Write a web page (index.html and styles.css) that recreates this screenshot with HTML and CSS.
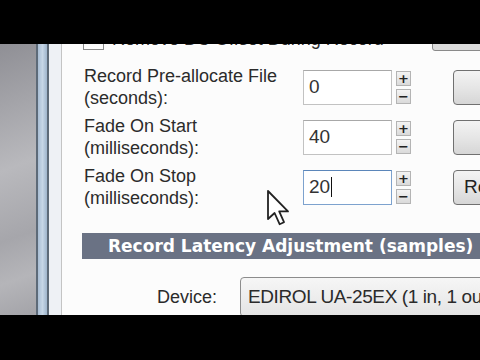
FILE: index.html
```html
<!DOCTYPE html>
<html lang="en">
<head>
  <meta charset="UTF-8">
  <title>Recording Options</title>
  <link rel="stylesheet" href="styles.css">
</head>
<body>
  <div class="bar-top"></div>
  <div class="screen">
    <div class="desktop"></div>
    <div class="win-edge">
      <div class="edge-dark"></div>
      <div class="edge-blue"></div>
      <div class="edge-dark"></div>
      <div class="edge-light"></div>
      <div class="edge-line"></div>
    </div>
    <div class="dialog">
      <!-- partly hidden checkbox row -->
      <div class="check-row">
        <span class="check"></span>
        <span class="check-text">Remove DC Offset During Record</span>
        <span class="btn-stub"></span>
      </div>

      <div class="field-row">
        <div class="label">Record Pre-allocate File<br>(seconds):</div>
        <div class="input">0</div>
        <div class="spin"><span>+</span><span>&minus;</span></div>
        <div class="btn"></div>
      </div>
      <div class="field-row">
        <div class="label">Fade On Start<br>(milliseconds):</div>
        <div class="input">40</div>
        <div class="spin"><span>+</span><span>&minus;</span></div>
        <div class="btn"></div>
      </div>
      <div class="field-row">
        <div class="label">Fade On Stop<br>(milliseconds):</div>
        <div class="input focused">20<span class="caret"></span></div>
        <div class="spin"><span>+</span><span>&minus;</span></div>
        <div class="btn">Reset</div>
      </div>

      <div class="section">Record Latency Adjustment (samples)</div>

      <div class="device-row">
        <div class="device-label">Device:</div>
        <div class="select">EDIROL UA-25EX (1 in, 1 out)</div>
      </div>
    </div>

    <!-- mouse pointer -->
    <svg class="cursor" width="26" height="38" viewBox="0 0 13 19">
      <path d="M1 1 L1 15 L4.3 12 L6.8 17.6 L9 16.6 L6.6 11.2 L11 11.2 Z" fill="#fff" stroke="#222" stroke-width="0.9" stroke-linejoin="round"/>
    </svg>
  </div>
  <div class="bar-bottom"></div>
</body>
</html>
```

FILE: styles.css
```css
html, body {
  margin: 0;
  padding: 0;
  background: #000;
}
body {
  width: 480px;
  height: 360px;
  overflow: hidden;
  font-family: "Liberation Sans", Arial, sans-serif;
}
.bar-top {
  height: 44px;
  background: #000;
}
.bar-bottom {
  height: 45px;
  background: #000;
}
.screen {
  position: relative;
  height: 271px;
  display: flex;
  overflow: hidden;
}

/* desktop and window border on the left */
.desktop {
  width: 36px;
  flex: none;
  background: linear-gradient(160deg, #8f8f95 0%, #b9b9bd 45%, #a6a6ab 70%, #b5b5b9 85%, #a3a3a8 100%);
}
.win-edge {
  display: flex;
  flex: none;
}
.edge-dark {
  width: 2px;
  background: #5d6a78;
}
.edge-blue {
  width: 9px;
  background: linear-gradient(90deg, #a9bed4, #c6d6e6 50%, #9fb5cc);
}
.edge-light {
  width: 12px;
  background: #eef1f5;
}
.edge-line {
  width: 1px;
  background: #c4c4c4;
}

/* dialog content */
.dialog {
  flex: none;
  width: 520px;
  background: #fcfcfc;
  padding-left: 20px;
  color: #2b2b2b;
  font-size: 18px;
}
.check-row {
  display: flex;
  align-items: center;
  height: 22px;
  margin-top: -16px;
  margin-bottom: 12px;
}
.check {
  width: 19px;
  height: 19px;
  margin-left: 1px;
  border: 1px solid #8a8a8a;
  background: linear-gradient(#f0f0f0, #fff);
  flex: none;
}
.check-text {
  margin-left: 8px;
  width: 314px;
  white-space: nowrap;
}
.btn-stub {
  width: 80px;
  height: 22px;
  margin-left: 6px;
  border: 1px solid #8a8a8a;
  border-radius: 3px;
  background: #dcdcdc;
}
.field-row {
  display: flex;
  align-items: center;
  height: 50px;
}
.label {
  width: 219px;
  padding-left: 2px;
  line-height: 22px;
  flex: none;
}
.input {
  width: 82px;
  height: 33px;
  border: 1px solid #c2c2c2;
  border-top-color: #a8a8a8;
  background: #fff;
  display: flex;
  align-items: center;
  padding-left: 5px;
  font-size: 19px;
  color: #333;
  flex: none;
}
.input.focused {
  border-color: #7da2ce;
  border-top-color: #5b86ba;
}
.caret {
  width: 1px;
  height: 20px;
  background: #111;
  margin-left: 1px;
}
.spin {
  display: flex;
  flex-direction: column;
  gap: 3px;
  margin-left: 4px;
  flex: none;
}
.spin span {
  width: 15px;
  height: 15px;
  border: 1px solid #b4b4b4;
  background: linear-gradient(#f4f4f4, #dadada);
  font: bold 13px/14px "DejaVu Sans", sans-serif;
  text-align: center;
  color: #222;
  box-sizing: border-box;
}
.btn {
  width: 90px;
  height: 33px;
  margin-left: 42px;
  border: 1px solid #707070;
  border-radius: 4px;
  background: linear-gradient(#f3f3f3, #e6e6e6 50%, #d6d6d6);
  flex: none;
  display: flex;
  align-items: center;
  padding-left: 10px;
  font-size: 19px;
  color: #222;
}
.section {
  margin-top: 21px;
  height: 26px;
  background: #6a7284;
  color: #fff;
  font: bold 17px/26px "DejaVu Sans", sans-serif;
  letter-spacing: 0;
  padding-left: 26px;
  white-space: nowrap;
  overflow: hidden;
}
.device-row {
  display: flex;
  align-items: center;
  margin-top: 18px;
}
.device-label {
  width: 135px;
  text-align: right;
  margin-right: 23px;
  flex: none;
}
.select {
  width: 280px;
  height: 38px;
  border: 1px solid #8c8c8c;
  border-radius: 4px;
  background: linear-gradient(#f6f6f6, #e4e4e4);
  display: flex;
  align-items: center;
  padding-left: 7px;
  font-size: 19px;
  letter-spacing: -0.4px;
  white-space: nowrap;
  flex: none;
}
.cursor {
  position: absolute;
  left: 266px;
  top: 145px;
}
```
